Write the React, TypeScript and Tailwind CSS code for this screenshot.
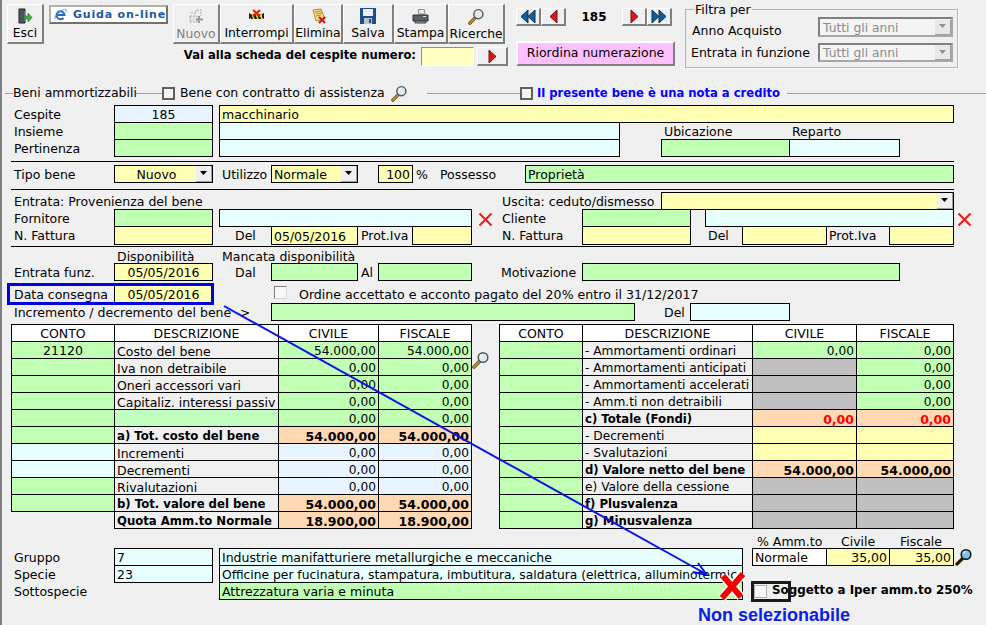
import { twMerge } from "tailwind-merge";
import type { ReactNode } from "react";

const YEL = "bg-[#ffffb3]";
const GRN = "bg-[#c0ffb4]";
const CYA = "bg-[#e8ffff]";
const BLU = "bg-[#e8f4ff]";
const ORA = "bg-[#ffd9b3]";
const GRY = "bg-[#c0c0c0]";
const BEVEL = "border border-t-white border-l-white border-r-[#808080] border-b-[#808080] border-b-2 border-r-2 bg-[#f0f0f0]";

function Cell({ className, children }: { className?: string; children?: ReactNode }) {
  return (
    <div className={twMerge("h-[18px] -mr-px shrink-0 border border-black flex items-center px-[2px] pt-[2px] leading-[14px] whitespace-nowrap overflow-hidden", className)}>
      {children}
    </div>
  );
}

function Row({ className, children }: { className?: string; children?: ReactNode }) {
  return <div className={twMerge("flex h-[17px] items-start leading-[19px] whitespace-nowrap", className)}>{children}</div>;
}

function Drop({ className, text, align }: { className?: string; text?: string; align?: string }) {
  return (
    <Cell className={twMerge("p-0 pl-[2px] relative", YEL, className)}>
      <span className={twMerge("flex-1 pt-[2px]", align)}>{text}</span>
      <span className="w-[16px] h-[16px] shrink-0 bg-[#f0f0f0] border-r border-b border-[#a0a0a0] flex items-center justify-center">
        <svg width="8" height="5" viewBox="0 0 8 5"><path d="M0 0h7L3.500 4z" fill="#000" /></svg>
      </span>
    </Cell>
  );
}

function DisabledSelect({ className }: { className?: string }) {
  return (
    <div className={twMerge("w-[135px] h-[19px] shrink-0 border-2 border-t-[#808080] border-l-[#808080] border-r-[#a8a8a8] border-b-[#a8a8a8] bg-[#f4f4f4] flex items-center pl-[3px] text-[#8c8c8c] text-[12.3px]", className)}>
      <span className="flex-1 pt-[2px]">Tutti gli anni</span>
      <span className="w-[16px] h-[15px] bg-[#e8e8e8] border-r border-b border-[#a0a0a0] flex items-center justify-center">
        <svg width="8" height="5" viewBox="0 0 8 5"><path d="M0 0h7L3.500 4z" fill="#909090" /></svg>
      </span>
    </div>
  );
}

function Lens({ size = 18, glass = "#dfeaf2", handle = "#c09038", rim = "#555" }: { size?: number; glass?: string; handle?: string; rim?: string }) {
  return (
    <svg width={size} height={size} viewBox="0 0 18 18" className="shrink-0">
      <path d="M7 11L2 16" stroke="#6b4a15" strokeWidth="3.600" strokeLinecap="round" />
      <path d="M7 11L2 16" stroke={handle} strokeWidth="2" strokeLinecap="round" />
      <circle cx="11" cy="6.500" r="4.800" fill={glass} stroke={rim} strokeWidth="1.500" />
      <path d="M8.500 5.500a3 3 0 0 1 2.500-2" stroke="#fff" strokeWidth="1.200" fill="none" />
    </svg>
  );
}

function RedX() {
  return (
    <svg width="15" height="15" viewBox="0 0 15 15" className="shrink-0 mt-[3px]">
      <path d="M1.500 1.500L13.500 13.500M13.500 1.500L1.500 13.500" stroke="#f01818" strokeWidth="2" />
    </svg>
  );
}

function Check({ className }: { className?: string }) {
  return <span className={twMerge("block w-[13px] h-[13px] shrink-0 border-2 border-[#606060] bg-[#f4f4f4]", className)} />;
}

function ToolBtn({ w, label, muted, children }: { w: string; label: string; muted?: boolean; children: ReactNode }) {
  return (
    <div className={twMerge("h-[40px] shrink-0 flex flex-col items-center pt-[3px] text-[12.3px]", BEVEL, w)}>
      <span className="h-[17px] flex items-center">{children}</span>
      <span className={twMerge("leading-[17px] mt-[1px]", muted ? "text-[#808080]" : "")}>{label}</span>
    </div>
  );
}

function NavBtn({ children }: { children: ReactNode }) {
  return <div className={twMerge("w-[25px] h-[18px] flex items-center justify-center", BEVEL)}>{children}</div>;
}

function Tri({ dir, double, red }: { dir: "l" | "r"; double?: boolean; red?: boolean }) {
  const c = red ? "#d81818" : "#0e5f9c";
  const e = red ? "#7a1010" : "#07304f";
  const one = dir === "l" ? "M8 1v13L1 7.500z" : "M1 1v13l7-6.500z";
  const two = dir === "l" ? "M15 1v13L8 7.500z" : "M8 1v13l7-6.500z";
  return (
    <svg width={double ? 16 : 9} height="15" viewBox={double ? "0 0 16 15" : "0 0 9 15"}>
      <path d={one} fill={c} stroke={e} />
      {double && <path d={two} fill={c} stroke={e} />}
    </svg>
  );
}

type TR = { c: string; cc: string; d: string; dc?: string; a: string; ac: string; b: string; bc: string; bold?: boolean; red?: boolean };

const D = "bg-[#f0f0f0]";
const leftRows: TR[] = [
  { c: "21120", cc: GRN, d: "Costo del bene", a: "54.000,00", ac: GRN, b: "54.000,00", bc: GRN },
  { c: "", cc: GRN, d: "Iva non detraibile", a: "0,00", ac: GRN, b: "0,00", bc: GRN },
  { c: "", cc: GRN, d: "Oneri accessori vari", a: "0,00", ac: GRN, b: "0,00", bc: GRN },
  { c: "", cc: GRN, d: "Capitaliz. interessi passiv", a: "0,00", ac: GRN, b: "0,00", bc: GRN },
  { c: "", cc: GRN, d: "", dc: "bg-[#c0ffc0]", a: "0,00", ac: GRN, b: "0,00", bc: GRN },
  { c: "", cc: GRN, d: "a) Tot. costo del bene", a: "54.000,00", ac: ORA, b: "54.000,00", bc: ORA, bold: true },
  { c: "", cc: CYA, d: "Incrementi", a: "0,00", ac: BLU, b: "0,00", bc: BLU },
  { c: "", cc: CYA, d: "Decrementi", a: "0,00", ac: BLU, b: "0,00", bc: BLU },
  { c: "", cc: GRN, d: "Rivalutazioni", a: "0,00", ac: BLU, b: "0,00", bc: BLU },
  { c: "", cc: GRN, d: "b) Tot. valore del bene", a: "54.000,00", ac: ORA, b: "54.000,00", bc: ORA, bold: true },
  { c: "", cc: "border-transparent", d: "Quota Amm.to Normale", a: "18.900,00", ac: ORA, b: "18.900,00", bc: ORA, bold: true },
];

const rightRows: TR[] = [
  { c: "", cc: GRN, d: "- Ammortamenti ordinari", a: "0,00", ac: GRN, b: "0,00", bc: GRN },
  { c: "", cc: GRN, d: "- Ammortamenti anticipati", a: "", ac: GRY, b: "0,00", bc: GRN },
  { c: "", cc: GRN, d: "- Ammortamenti accelerati", a: "", ac: GRY, b: "0,00", bc: GRN },
  { c: "", cc: GRN, d: "- Amm.ti non detraibili", a: "", ac: GRY, b: "0,00", bc: GRN },
  { c: "", cc: GRN, d: "c) Totale (Fondi)", a: "0,00", ac: ORA, b: "0,00", bc: ORA, bold: true, red: true },
  { c: "", cc: GRN, d: "- Decrementi", a: "", ac: YEL, b: "", bc: YEL },
  { c: "", cc: GRN, d: "- Svalutazioni", a: "", ac: YEL, b: "", bc: YEL },
  { c: "", cc: GRN, d: "d) Valore netto del bene", a: "54.000,00", ac: ORA, b: "54.000,00", bc: ORA, bold: true },
  { c: "", cc: GRN, d: "e) Valore della cessione", a: "", ac: GRY, b: "", bc: GRY },
  { c: "", cc: GRN, d: "f) Plusvalenza", a: "", ac: GRY, b: "", bc: GRY, bold: true },
  { c: "", cc: GRN, d: "g) Minusvalenza", a: "", ac: GRY, b: "", bc: GRY, bold: true },
];

function Ledger({ rows, w, size }: { rows: TR[]; w: [string, string, string, string]; size: string }) {
  const num = (bold?: boolean) => (bold ? "font-bold text-[12.5px]" : "text-[12.2px]");
  return (
    <div className="flex flex-col">
      <Row>
        <Cell className={twMerge("bg-white justify-center", w[0])}>CONTO</Cell>
        <Cell className={twMerge("bg-white justify-center", w[1])}>DESCRIZIONE</Cell>
        <Cell className={twMerge("bg-white justify-center", w[2])}>CIVILE</Cell>
        <Cell className={twMerge("bg-white justify-center", w[3])}>FISCALE</Cell>
      </Row>
      {rows.map((r, i) => (
        <Row key={i}>
          <Cell className={twMerge("justify-center", r.cc, w[0])}>{r.c}</Cell>
          <Cell className={twMerge(r.dc ?? D, size, r.bold && "font-bold text-[11.7px]", w[1])}>{r.d}</Cell>
          <Cell className={twMerge("justify-end", r.ac, num(r.bold), r.red && "text-[#ff0000]", w[2])}>{r.a}</Cell>
          <Cell className={twMerge("justify-end", r.bc, num(r.bold), r.red && "text-[#ff0000]", w[3])}>{r.b}</Cell>
        </Row>
      ))}
    </div>
  );
}

export default function App() {
  return (
    <div className="relative w-[986px] h-[625px] overflow-hidden bg-[#f0f0f0] text-black font-['DejaVu_Sans',sans-serif] text-[12.5px] shadow-[inset_2px_0_0_#808080]">
      {/* toolbar */}
      <header className="flex h-[87px]">
        <div className="w-[516px] flex flex-col shrink-0">
          <div className="flex pt-[4px] pl-[7px]">
            <ToolBtn w="w-[37px]" label="Esci">
              <svg width="16" height="16" viewBox="0 0 16 16">
                <path d="M2 1h6v14H2z" fill="#4b5560" stroke="#222" />
                <path d="M8 3v10" stroke="#99a" />
                <path d="M7 8h4V5l4 4.500-4 4.500v-3H7z" fill="#3cae3c" stroke="#1d6b1d" strokeWidth=".6" />
              </svg>
            </ToolBtn>
            <div className="ml-[5px] mt-[1px] w-[119px] h-[19px] shrink-0 flex items-center pl-[3px] gap-[6px] border-2 border-t-[#b0b0b0] border-l-[#b0b0b0] border-r-[#707070] border-b-[#707070] bg-white">
              <svg width="13" height="13" viewBox="0 0 13 13" className="shrink-0">
                <path d="M3 7h7.500a4 4 0 1 0-1 3" fill="none" stroke="#2a6cc0" strokeWidth="2" />
                <path d="M1 11c-1-2 3-7 8-9 2-1 4-1 3 2" fill="none" stroke="#5a94d8" strokeWidth="1" />
              </svg>
              <span className="text-[#2056a8] font-bold text-[11px] tracking-[0.8px] pt-px">Guida on-line</span>
            </div>
            <div className="ml-[5px] flex">
              <ToolBtn w="w-[47px]" label="Nuovo" muted>
                <svg width="17" height="17" viewBox="0 0 17 17">
                  <path d="M3 5h5V2h5v6" fill="none" stroke="#aaa" strokeDasharray="2 1" />
                  <path d="M2 8h7v6H2z" fill="#e4e4e4" stroke="#aaa" strokeDasharray="2 1" />
                  <path d="M11 8v7M8 11.500h7" stroke="#999" strokeWidth="2" />
                </svg>
              </ToolBtn>
              <ToolBtn w="w-[74px]" label="Interrompi">
                <svg width="17" height="15" viewBox="0 0 17 15">
                  <path d="M1 4l5 3-5 3zM16 4l-5 3 5 3zM3 5h11v5H3z" fill="#1c1c1c" />
                  <path d="M4 5l2 5M8 5l2 5M12 5l2 5" stroke="#f0d820" strokeWidth="1.500" />
                  <path d="M5 1l7 6M12 1L5 7" stroke="#e81818" strokeWidth="2" />
                </svg>
              </ToolBtn>
              <ToolBtn w="w-[49px]" label="Elimina">
                <svg width="17" height="16" viewBox="0 0 17 16">
                  <path d="M3 2l8-1 4 10-9 2z" fill="#f4dc90" stroke="#b89030" />
                  <path d="M5 4l6-1M6 6l6-1M6 8l5-1" stroke="#b89030" />
                  <path d="M9 9l6 6M15 9l-6 6" stroke="#d01818" strokeWidth="2" />
                </svg>
              </ToolBtn>
              <ToolBtn w="w-[51px]" label="Salva">
                <svg width="16" height="16" viewBox="0 0 16 16">
                  <path d="M0 0h16v16H0z" fill="#1f4f86" />
                  <path d="M3 1h10v7H3z" fill="#e8eef4" />
                  <path d="M4 10h8v6H4z" fill="#b8c4d0" />
                  <path d="M9 11h2v4H9z" fill="#1f4f86" />
                </svg>
              </ToolBtn>
              <ToolBtn w="w-[54px]" label="Stampa">
                <svg width="17" height="15" viewBox="0 0 17 15">
                  <path d="M6 1l6-1 1 5H7z" fill="#eee" stroke="#888" />
                  <path d="M1 6h15v6H1z" fill="#5c6066" stroke="#333" />
                  <path d="M3 12h11v2H3z" fill="#999" stroke="#444" />
                  <path d="M11 7h3v1h-3z" fill="#ddd" />
                </svg>
              </ToolBtn>
              <ToolBtn w="w-[57px]" label="Ricerche">
                <Lens size={17} />
              </ToolBtn>
            </div>
          </div>
          <div className="mt-[3px] h-[19px] flex justify-end items-center pr-[8px]">
            <span className="font-bold text-[11.6px] -mt-px">Vai alla scheda del cespite numero:</span>
            <span className="ml-[5px] w-[53px] h-[19px] bg-[#ffffc4] border border-t-[#909090] border-l-[#909090] border-r-white border-b-white" />
            <span className={twMerge("ml-[3px] w-[31px] h-[19px] flex items-center justify-center", BEVEL)}>
              <Tri dir="r" red />
            </span>
          </div>
        </div>

        <div className="w-[169px] shrink-0 flex flex-col">
          <div className="mt-[8px] flex items-center w-[158px]">
            <NavBtn><Tri dir="l" double /></NavBtn>
            <NavBtn><Tri dir="l" red /></NavBtn>
            <span className="w-[56px] text-center font-bold text-[12px]">185</span>
            <NavBtn><Tri dir="r" red /></NavBtn>
            <NavBtn><Tri dir="r" double /></NavBtn>
          </div>
          <div className="mt-[15px] w-[159px] h-[25px] flex items-center justify-center bg-[#ffc0ff] border-2 border-t-white border-l-white border-r-[#808080] border-b-[#808080]">
            Riordina numerazione
          </div>
        </div>

        <div className="relative mt-[9px] w-[273px] h-[59px] shrink-0 border border-[#b4b4b4] pl-[6px] pt-[7px] shadow-[1px_1px_0_#fff]">
          <span className="absolute left-[8px] -top-[9px] bg-[#f0f0f0] px-px leading-[17px]">Filtra per</span>
          <div className="flex items-start h-[20px]">
            <span className="w-[126px] shrink-0 leading-[27px]">Anno Acquisto</span>
            <DisabledSelect className="h-[20px]" />
          </div>
          <div className="flex items-start mt-[6px]">
            <span className="w-[126px] shrink-0 -ml-px mr-px leading-[20px]">Entrata in funzione</span>
            <DisabledSelect />
          </div>
        </div>
      </header>

      {/* group title */}
      <div className="flex h-[13px] items-center whitespace-nowrap">
        <span className="ml-[5px] w-[8px] h-px bg-[#a0a0a0]" />
        <span className="w-[121px] shrink-0">Beni ammortizzabili</span>
        <span className="ml-[2px] w-[26px] h-px bg-[#a0a0a0]" />
        <Check />
        <span className="ml-[5px] w-[207px] shrink-0">Bene con contratto di assistenza</span>
        <span className="ml-[4px] w-[18px]"><Lens size={17} /></span>
        <span className="ml-[18px] w-[93px] h-px bg-[#a0a0a0]" />
        <Check />
        <span className="ml-[4px] w-[243px] shrink-0 text-[#0000ff] font-bold text-[11.6px]">Il presente bene è una nota a credito</span>
        <span className="ml-[7px] flex-1 h-px bg-[#a0a0a0]" />
      </div>

      {/* anagrafica */}
      <section className="pl-[14px] mt-[5px]">
        <Row>
          <span className="w-[100px]">Cespite</span>
          <Cell className={twMerge("w-[99px] justify-center", BLU)}>185</Cell>
          <Cell className={twMerge("ml-[7px] w-[735px]", YEL)}>macchinario</Cell>
        </Row>
        <Row>
          <span className="w-[100px]">Insieme</span>
          <Cell className={twMerge("w-[99px]", GRN)} />
          <Cell className={twMerge("ml-[7px] w-[401px]", CYA)} />
          <span className="ml-[45px] w-[128px]">Ubicazione</span>
          <span>Reparto</span>
        </Row>
        <Row>
          <span className="w-[100px]">Pertinenza</span>
          <Cell className={twMerge("w-[99px]", GRN)} />
          <Cell className={twMerge("ml-[7px] w-[401px]", CYA)} />
          <Cell className={twMerge("ml-[42px] w-[129px]", GRN)} />
          <Cell className={twMerge("w-[111px]", CYA)} />
        </Row>

        <div className="mt-[5px] -ml-[3px] w-[943px] h-px bg-black" />

        <Row className="mt-[3px]">
          <span className="w-[100px]">Tipo bene</span>
          <Drop className="w-[99px]" text="Nuovo" align="text-center" />
          <span className="ml-[10px] w-[49px]">Utilizzo</span>
          <Drop className="w-[87px]" text="Normale" />
          <Cell className={twMerge("ml-[21px] w-[35px] justify-end", YEL)}>100</Cell>
          <span className="ml-[4px] w-[24px]">%</span>
          <span className="w-[85px]">Possesso</span>
          <Cell className={twMerge("w-[429px]", GRN)}>Proprietà</Cell>
        </Row>

        <div className="mt-[7px] -ml-[3px] w-[943px] h-px bg-black" />

        <Row className="mt-[2px]">
          <span className="w-[488px]">Entrata: Provenienza del bene</span>
          <span className="w-[159px]">Uscita: ceduto/dismesso</span>
          <Drop className="w-[293px]" />
        </Row>
        <Row>
          <span className="w-[100px]">Fornitore</span>
          <Cell className={twMerge("w-[99px]", GRN)} />
          <Cell className={twMerge("ml-[7px] w-[253px]", CYA)} />
          <span className="ml-[7px]"><RedX /></span>
          <span className="ml-[9px] w-[80px]">Cliente</span>
          <Cell className={twMerge("w-[109px]", GRN)} />
          <Cell className={twMerge("ml-[15px] w-[249px]", CYA)} />
          <span className="ml-[4px]"><RedX /></span>
        </Row>
        <Row className="h-[18px]">
          <span className="w-[100px]">N. Fattura</span>
          <Cell className={twMerge("w-[99px] h-[19px]", YEL)} />
          <span className="ml-[23px] w-[36px]">Del</span>
          <Cell className={twMerge("w-[87px] h-[19px]", YEL)}>05/05/2016</Cell>
          <span className="ml-[4px] w-[51px]">Prot.Iva</span>
          <Cell className={twMerge("w-[60px] h-[19px]", YEL)} />
          <span className="ml-[31px] w-[80px]">N. Fattura</span>
          <Cell className={twMerge("w-[109px] h-[19px]", YEL)} />
          <span className="ml-[18px] w-[34px]">Del</span>
          <Cell className={twMerge("w-[85px] h-[19px]", YEL)} />
          <span className="ml-[3px] w-[60px]">Prot.Iva</span>
          <Cell className={twMerge("w-[65px] h-[19px]", YEL)} />
        </Row>

        <div className="mt-[2px] -ml-[3px] w-[943px] h-px bg-black" />

        <Row className="h-[16px]">
          <span className="ml-[103px] w-[105px]">Disponibilità</span>
          <span>Mancata disponibilità</span>
        </Row>
        <Row>
          <span className="w-[100px]">Entrata funz.</span>
          <Cell className={twMerge("w-[99px] justify-center", YEL)}>05/05/2016</Cell>
          <span className="ml-[23px] w-[36px]">Dal</span>
          <Cell className={twMerge("w-[87px]", GRN)} />
          <span className="ml-[4px] w-[17px]">Al</span>
          <Cell className={twMerge("w-[94px]", GRN)} />
          <span className="ml-[30px] w-[81px]">Motivazione</span>
          <Cell className={twMerge("w-[318px]", GRN)} />
        </Row>
        <Row className="mt-[5px]">
          <span className="w-[100px]">Data consegna</span>
          <Cell className={twMerge("w-[99px] justify-center", YEL)}>05/05/2016</Cell>
          <span className="ml-[62px] mt-[1px] w-[13px] h-[13px] border border-t-[#808080] border-l-[#808080] border-r-[#d8d8d8] border-b-[#d8d8d8] bg-[#f8f8f8]" />
          <span className="ml-[12px] text-[12.6px]">Ordine accettato e acconto pagato del 20% entro il 31/12/2017</span>
        </Row>
        <Row className="mt-[1px]">
          <span className="w-[257px]">Incremento / decremento del bene -&gt;</span>
          <Cell className={twMerge("w-[364px]", GRN)} />
          <span className="ml-[30px] w-[26px]">Del</span>
          <Cell className={twMerge("w-[100px]", CYA)} />
        </Row>

        {/* tabelle */}
        <div className="relative mt-[4px] -ml-[3px] flex">
          <div className="w-[488px] shrink-0">
            <Ledger rows={leftRows} size="text-[12.5px]" w={["w-[104px]", "w-[165px]", "w-[101px]", "w-[94px]"]} />
          </div>
          <Ledger rows={rightRows} size="text-[12.2px]" w={["w-[84px]", "w-[171px]", "w-[105px]", "w-[98px]"]} />
          <span className="absolute left-[461px] top-[27px]"><Lens size={18} /></span>
        </div>

        {/* classificazione */}
        <div className="mt-[5px] flex">
          <div className="w-[738px] shrink-0 pt-[15px]">
            <Row>
              <span className="w-[100px]">Gruppo</span>
              <Cell className={twMerge("w-[99px]", CYA)}>7</Cell>
              <Cell className={twMerge("ml-[7px] w-[524px]", CYA)}>Industrie manifatturiere metallurgiche e meccaniche</Cell>
            </Row>
            <Row>
              <span className="w-[100px]">Specie</span>
              <Cell className={twMerge("w-[99px]", CYA)}>23</Cell>
              <Cell className={twMerge("ml-[7px] w-[524px] text-[12.3px]", CYA)}>Officine per fucinatura, stampatura, imbutitura, saldatura (elettrica, alluminotermic</Cell>
            </Row>
            <Row>
              <span className="w-[205px]">Sottospecie</span>
              <Cell className={twMerge("w-[524px]", GRN)}>Attrezzatura varia e minuta</Cell>
            </Row>
          </div>
          <div className="flex-1">
            <div className="flex h-[15px] leading-[17px]">
              <span className="ml-[5px] w-[84px]">% Amm.to</span>
              <span className="w-[59px]">Civile</span>
              <span>Fiscale</span>
            </div>
            <Row>
              <Cell className="w-[75px] bg-white">Normale</Cell>
              <Cell className={twMerge("w-[64px] justify-end", YEL)}>35,00</Cell>
              <Cell className={twMerge("w-[65px] justify-end", YEL)}>35,00</Cell>
              <span className="ml-[2px]"><Lens size={18} glass="#7cc0ee" handle="#111" rim="#111" /></span>
            </Row>
            <div className="relative mt-[16px] h-[20px] flex items-center">
              <span className="ml-[2px] w-[13px] h-[13px] border border-[#b0b0b0] bg-[#f8f8f8]" />
              <span className="ml-[5px] font-bold text-[11.9px] whitespace-nowrap">Soggetto a Iper amm.to 250%</span>
              <span className="absolute -left-px top-0 w-[40px] h-[21px] border-[3px] border-[#1a1a1a]" />
            </div>
          </div>
        </div>
        <div className="mt-[4px] ml-[684px] text-[#0a1ee6] font-bold text-[18px] leading-[21px] whitespace-nowrap font-['Liberation_Sans',sans-serif]">Non selezionabile</div>
      </section>

      {/* annotazioni */}
      <div className="absolute left-[7px] top-[283px] w-[207px] h-[22px] border-[3px] border-[#0000e0]" />
      <svg className="absolute inset-0 pointer-events-none" width="986" height="625" viewBox="0 0 986 625">
        <path d="M224 306L706 574" stroke="#0a14e6" strokeWidth="2" />
        <path d="M707 575L693 572M707 575L698 563" stroke="#0a14e6" strokeWidth="2" />
        <path d="M723 576L741 597M743 574L722 598" stroke="#fff" strokeWidth="9" />
        <path d="M723 576L741 597M743 574L722 598" stroke="#f00000" strokeWidth="6" />
      </svg>
    </div>
  );
}
